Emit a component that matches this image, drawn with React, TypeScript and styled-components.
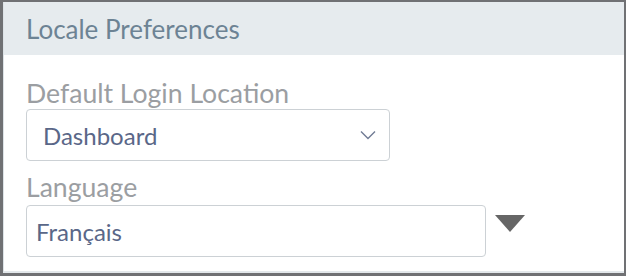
import styled, { createGlobalStyle } from 'styled-components'

const GlobalStyle = createGlobalStyle`
  html, body {
    margin: 0;
    padding: 0;
    background: #ffffff;
  }
  body {
    font-family: Lato, 'Liberation Sans', sans-serif;
  }
`

const Frame = styled.div`
  box-sizing: border-box;
  width: 626px;
  height: 276px;
  border-style: solid;
  border-color: #707174;
  border-width: 2px 2px 3px 3px;
  background: #ffffff;
`

const Panel = styled.section`
  box-sizing: border-box;
  height: 100%;
  display: flex;
  flex-direction: column;
  border-left: 1px solid #dde3e7;
  border-bottom: 2px solid #e3e8eb;
`

const Header = styled.header`
  height: 53px;
  display: flex;
  align-items: center;
  padding-left: 22px;
  background: #e6ebee;
`

const Title = styled.h2`
  margin: 0;
  font-size: 26px;
  font-weight: 400;
  color: #6d8394;
`

const Body = styled.div`
  display: flex;
  flex-direction: column;
  padding: 23px 0 0 22px;
`

const Label = styled.label<{ $gap?: number }>`
  display: block;
  font-size: 26.6px;
  line-height: 30px;
  color: #9b9ea2;
  margin-bottom: ${p => p.$gap ?? 1}px;
`

const SelectBox = styled.div<{ $width: number; $pad: number }>`
  box-sizing: border-box;
  width: ${p => p.$width}px;
  height: 52px;
  display: flex;
  align-items: center;
  justify-content: space-between;
  padding: 0 13px 0 ${p => p.$pad}px;
  border: 1px solid #ccd1d5;
  border-radius: 4px;
  background: #ffffff;
`

const Value = styled.span`
  font-size: 24px;
  color: #5a6788;
`

const Field = styled.div<{ $space?: number }>`
  margin-bottom: ${p => p.$space ?? 0}px;
`

const Row = styled.div`
  display: flex;
  align-items: flex-start;
  gap: 9px;
`

const Caret = styled.div`
  width: 0;
  height: 0;
  margin-top: 10px;
  border-left: 15px solid transparent;
  border-right: 15px solid transparent;
  border-top: 17px solid #666666;
`

function Chevron () {
  return (
    <svg width='16' height='10' viewBox='0 0 16 10' fill='none'>
      <path d='M1 1.5 L8 8.5 L15 1.5' stroke='#717c95' strokeWidth='1.4' />
    </svg>
  )
}

function App () {
  return (
    <>
      <GlobalStyle />
      <Frame>
        <Panel>
          <Header>
            <Title>Locale Preferences</Title>
          </Header>
          <Body>
            <Field $space={11}>
              <Label>Default Login Location</Label>
              <SelectBox $width={364} $pad={16}>
                <Value>Dashboard</Value>
                <Chevron />
              </SelectBox>
            </Field>
            <Field>
              <Label $gap={3}>Language</Label>
              <Row>
                <SelectBox $width={460} $pad={9}>
                  <Value>Français</Value>
                </SelectBox>
                <Caret />
              </Row>
            </Field>
          </Body>
        </Panel>
      </Frame>
    </>
  )
}

export default App
